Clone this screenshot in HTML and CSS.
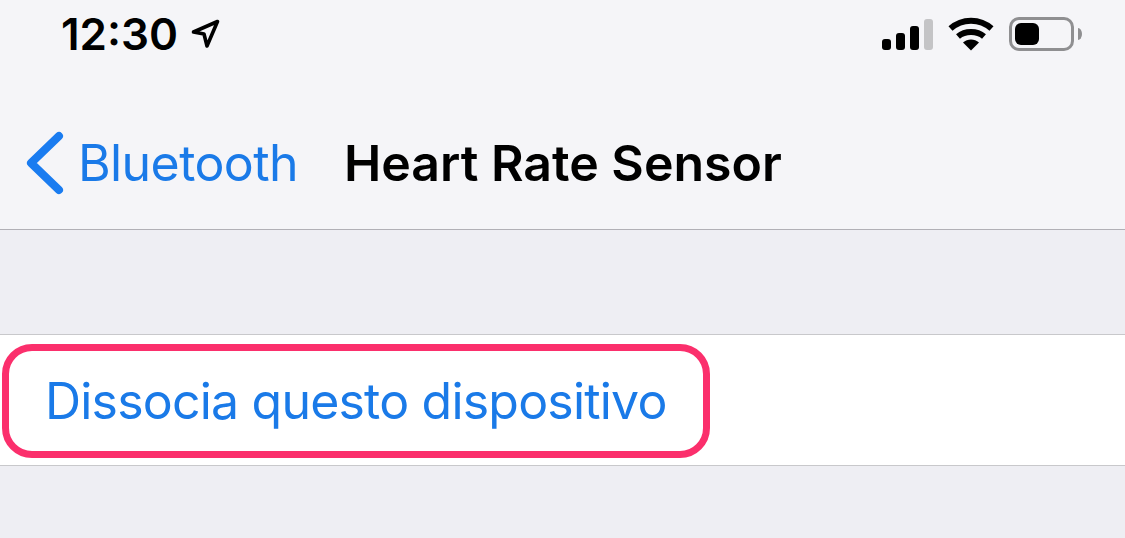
FILE: index.html
```html
<!DOCTYPE html>
<html lang="it">
<head>
  <meta charset="UTF-8" />
  <meta name="viewport" content="width=device-width, initial-scale=1.0"/>
  <title>Heart Rate Sensor</title>
  <link rel="stylesheet" href="styles.css">
</head>
<body>
  <header class="top">
    <div class="status">
      <div class="status-left">
        <span class="time">12:30</span>
        <svg class="loc" width="30" height="30" viewBox="0 0 30 30">
          <path d="M3.5 13 27.5 2.5 17 27 14 15Z" fill="none" stroke="#000" stroke-width="3.6" stroke-linejoin="round"/>
        </svg>
      </div>
      <div class="status-right">
        <div class="signal">
          <span class="bar bar-1"></span>
          <span class="bar bar-2"></span>
          <span class="bar bar-3"></span>
          <span class="bar bar-4"></span>
        </div>
        <svg class="wifi" width="46" height="34" viewBox="0 0 46 34">
          <path d="M2.5 11.5C14 1 32 1 43.5 11.5" fill="none" stroke="#000" stroke-width="6"/>
          <path d="M10 19.5C17 13.5 29 13.5 36 19.5" fill="none" stroke="#000" stroke-width="6"/>
          <path d="M15 25.5C19.5 21.5 26.5 21.5 31 25.5L23 33.5Z" fill="#000"/>
        </svg>
        <div class="battery">
          <div class="battery-body"><div class="battery-fill"></div></div>
          <span class="battery-nub"></span>
        </div>
      </div>
    </div>
    <nav class="nav">
      <svg class="chevron" width="38" height="64" viewBox="0 0 38 64">
        <path d="M33 5 5 32 33 59" fill="none" stroke="#1a7cf0" stroke-width="8" stroke-linecap="round" stroke-linejoin="round"/>
      </svg>
      <span class="back">Bluetooth</span>
      <span class="title">Heart Rate Sensor</span>
    </nav>
  </header>

  <main class="content">
    <div class="row">
      <div class="highlight">
        <span class="action">Dissocia questo dispositivo</span>
      </div>
    </div>
  </main>
</body>
</html>
```

FILE: styles.css
```css
* {
  box-sizing: border-box;
}
html, body {
  margin: 0;
  height: 100%;
}
body {
  font-family: 'Inter', 'Liberation Sans', sans-serif;
  background-color: #eeeef3;
  overflow: hidden;
}
.top {
  height: 230px;
  background-color: #f5f5f8;
  border-bottom: 1px solid #b1b0b6;
}
.status {
  height: 68px;
  padding: 0 43px 0 61px;
  display: flex;
  justify-content: space-between;
  align-items: center;
}
.status-left {
  display: flex;
  align-items: center;
  gap: 12px;
}
.time {
  font-size: 44px;
  font-weight: 600;
  color: #000;
  line-height: 68px;
}
.status-right {
  display: flex;
  align-items: center;
  gap: 15px;
}
.signal {
  display: flex;
  align-items: flex-end;
  gap: 5px;
  height: 31px;
}
.bar {
  width: 9px;
  background: #000;
  border-radius: 3px;
}
.bar-1 { height: 11px; }
.bar-2 { height: 17px; }
.bar-3 { height: 24px; }
.bar-4 { height: 31px; background: #c4c4c6; }
.battery {
  display: flex;
  align-items: center;
  gap: 4px;
}
.battery-body {
  width: 65px;
  height: 34px;
  border: 3px solid #8f8f91;
  border-radius: 10px;
  padding: 3px;
}
.battery-fill {
  width: 24px;
  height: 100%;
  background: #000;
  border-radius: 6px;
}
.battery-nub {
  width: 4px;
  height: 12px;
  background: #8f8f91;
  border-radius: 0 100% 100% 0 / 0 50% 50% 0;
}
.nav {
  height: 161px;
  padding: 29px 0 0 26px;
  display: flex;
  align-items: center;
  font-size: 50px;
}
.chevron {
  margin-right: 14px;
}
.back {
  color: #1a7ae8;
  letter-spacing: -0.6px;
  margin-right: 46px;
}
.title {
  color: #000;
  font-weight: 600;
}
.content {
  padding-top: 104px;
}
.row {
  height: 132px;
  background: #fff;
  border-top: 1px solid #c8c8cb;
  border-bottom: 1px solid #c8c8cb;
  padding: 9px 415px 7px 2px;
}
.highlight {
  height: 100%;
  border: 7px solid #fb2f6c;
  border-radius: 30px;
  padding-left: 36px;
  display: flex;
  align-items: center;
}
.action {
  font-size: 50px;
  letter-spacing: -0.8px;
  color: #1a7ae8;
}
```
